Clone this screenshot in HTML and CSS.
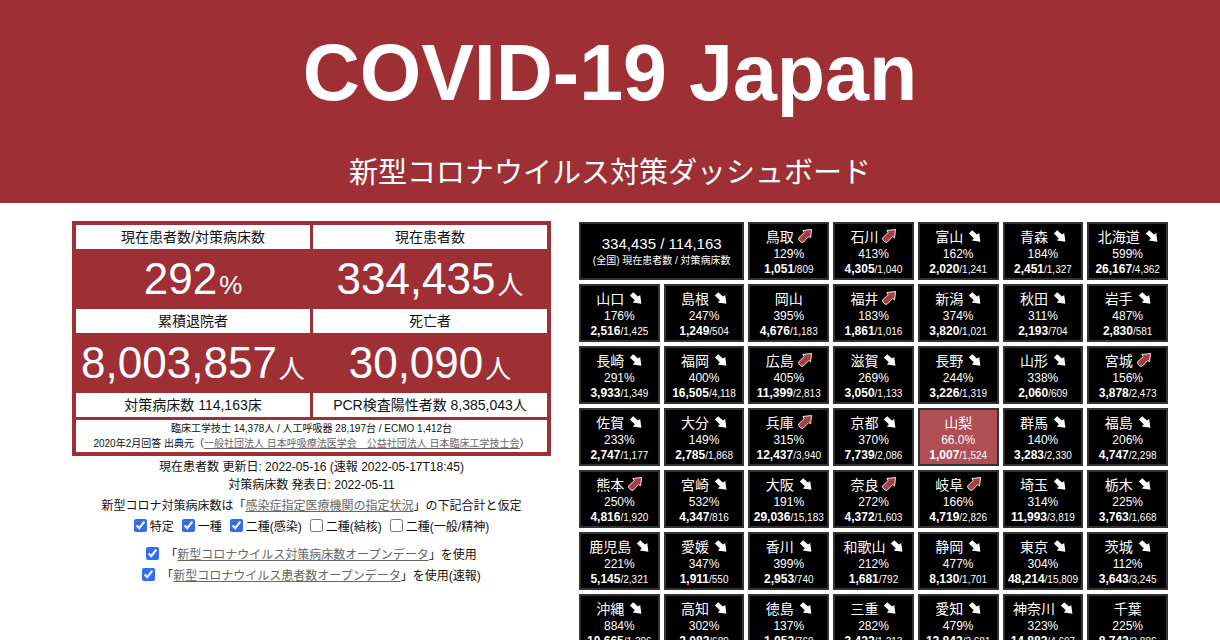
FILE: index.html
```html
<!DOCTYPE html>
<html lang="ja">
<head>
<meta charset="utf-8">
<title>COVID-19 Japan 新型コロナウイルス対策ダッシュボード</title>
<link rel="stylesheet" href="styles.css">
</head>
<body>
<header class="hero">
  <h1 class="hero-title">COVID-19 Japan</h1>
  <p class="hero-sub">新型コロナウイルス対策ダッシュボード</p>
</header>
<main class="board">
  <section class="summary">
    <div class="stats">
      <h2 class="label">現在患者数/対策病床数</h2>
      <h2 class="label">現在患者数</h2>
      <p class="figure">292<span class="unit">%</span></p>
      <p class="figure">334,435<span class="unit">人</span></p>
      <h2 class="label">累積退院者</h2>
      <h2 class="label">死亡者</h2>
      <p class="figure">8,003,857<span class="unit">人</span></p>
      <p class="figure">30,090<span class="unit">人</span></p>
      <p class="label">対策病床数 114,163床</p>
      <p class="label">PCR検査陽性者数 8,385,043人</p>
      <p class="equipment">臨床工学技士 14,378人 / 人工呼吸器 28,197台 / ECMO 1,412台<br>2020年2月回答 出典元（<a href="#source">一般社団法人 日本呼吸療法医学会　公益社団法人 日本臨床工学技士会</a>）</p>
    </div>
    <p class="note">現在患者数 更新日: 2022-05-16 (速報 2022-05-17T18:45)</p>
    <p class="note">対策病床数 発表日: 2022-05-11</p>
    <p class="note note-beds">新型コロナ対策病床数は「<a href="#beds">感染症指定医療機関の指定状況</a>」の下記合計と仮定</p>
    <div class="checks">
      <label class="check"><input type="checkbox" checked>特定</label>
      <label class="check"><input type="checkbox" checked>一種</label>
      <label class="check"><input type="checkbox" checked>二種(感染)</label>
      <label class="check"><input type="checkbox">二種(結核)</label>
      <label class="check"><input type="checkbox">二種(一般/精神)</label>
    </div>
    <div class="sources">
      <div class="source"><input type="checkbox" id="open-beds" checked><label for="open-beds">「<a href="#open-beds-data">新型コロナウイルス対策病床数オープンデータ</a>」を使用</label></div>
      <div class="source"><input type="checkbox" id="open-patients" checked><label for="open-patients">「<a href="#open-patients-data">新型コロナウイルス患者数オープンデータ</a>」を使用(速報)</label></div>
    </div>
  </section>
  <section class="tiles" id="tiles">
    <div class="tile tile-total">
      <div class="total-figure">334,435 / 114,163</div>
      <div class="total-label">(全国) 現在患者数 / 対策病床数</div>
    </div>
  </section>
</main>
<script src="tiles.js"></script>
</body>
</html>
```
FILE: styles.css
```css
* { box-sizing: border-box; }
body {
  margin: 0;
  background: #fff;
  color: #111;
  font-family: "Liberation Sans", "Noto Sans CJK JP", sans-serif;
}
h1, h2, p { margin: 0; font-weight: 400; }
a { color: #666; text-decoration: underline; }

.hero {
  padding: 27px 0 12px;
  background: #9e3035;
  color: #fff;
  text-align: center;
}
.hero-title { font-size: 79px; line-height: 92px; font-weight: 700; }
.hero-sub { padding-top: 36px; font-size: 29px; line-height: 36px; }

.board {
  display: grid;
  grid-template-columns: 479fr 589fr;
  gap: 28px;
  align-items: start;
  padding: 18px 52px 20px 72px;
}

.summary { text-align: center; }
.stats {
  display: grid;
  grid-template-columns: 1fr 1fr;
  column-gap: 3px;
  margin-bottom: 2px;
  padding: 4px;
  background: #9e3035;
}
.label { background: #fff; font-size: 14px; line-height: 24px; }
.figure { color: #fff; font-size: 44px; line-height: 60px; white-space: nowrap; }
.unit { padding-left: 2px; font-size: 26px; line-height: 1; }
.equipment {
  grid-column: 1 / -1;
  margin-top: 3px;
  padding: 1px 0;
  background: #fff;
  font-size: 10px;
  line-height: 15px;
}
.note { font-size: 12px; line-height: 18px; }
.note-beds { padding: 3px 0 2px; }

.checks { display: flex; justify-content: center; gap: 8px; }
.check, .source {
  display: flex;
  align-items: center;
  font-size: 12px;
  line-height: 20px;
}
.check { gap: 3px; white-space: nowrap; }
.source { justify-content: center; gap: 6px; }
.sources { display: grid; gap: 1px; padding-top: 8px; }
input { width: 13px; height: 13px; margin: 0; accent-color: #2f6df6; }
.check input, .source input { margin-bottom: 4px; }

.tiles {
  display: grid;
  grid-template-columns: repeat(7, 1fr);
  gap: 4px;
  padding-top: 1px;
}
.tile {
  padding: 3px 0 1px;
  border: 2px solid #333;
  background: #000;
  color: #fff;
  text-align: center;
  white-space: nowrap;
}
.tile-total { grid-column: span 2; padding-top: 10px; }
.tile-low { background: #b04e55; }
.total-figure { font-size: 15px; line-height: 20px; }
.total-label { font-size: 10px; line-height: 14px; }
.name {
  display: flex;
  align-items: center;
  justify-content: center;
  gap: 4px;
  font-size: 14px;
  line-height: 20px;
}
.arrow { width: 14px; height: 14px; margin-bottom: 2px; }
.rate { font-size: 12px; line-height: 15px; }
.count { font-size: 10px; line-height: 15px; }
.count b { font-size: 12px; }
```
FILE: tiles.js
```js
// name, patients per bed, patients, beds, trend
const prefectures = [
  ["鳥取", "129%", "1,051", "809", "up"],
  ["石川", "413%", "4,305", "1,040", "up"],
  ["富山", "162%", "2,020", "1,241", "down"],
  ["青森", "184%", "2,451", "1,327", "down"],
  ["北海道", "599%", "26,167", "4,362", "down"],
  ["山口", "176%", "2,516", "1,425", "down"],
  ["島根", "247%", "1,249", "504", "down"],
  ["岡山", "395%", "4,676", "1,183", ""],
  ["福井", "183%", "1,861", "1,016", "up"],
  ["新潟", "374%", "3,820", "1,021", "down"],
  ["秋田", "311%", "2,193", "704", "down"],
  ["岩手", "487%", "2,830", "581", "down"],
  ["長崎", "291%", "3,933", "1,349", "down"],
  ["福岡", "400%", "16,505", "4,118", "down"],
  ["広島", "405%", "11,399", "2,813", "up"],
  ["滋賀", "269%", "3,050", "1,133", "down"],
  ["長野", "244%", "3,226", "1,319", "down"],
  ["山形", "338%", "2,060", "609", "down"],
  ["宮城", "156%", "3,878", "2,473", "up"],
  ["佐賀", "233%", "2,747", "1,177", "down"],
  ["大分", "149%", "2,785", "1,868", "down"],
  ["兵庫", "315%", "12,437", "3,940", "up"],
  ["京都", "370%", "7,739", "2,086", "down"],
  ["山梨", "66.0%", "1,007", "1,524", ""],
  ["群馬", "140%", "3,283", "2,330", "down"],
  ["福島", "206%", "4,747", "2,298", "down"],
  ["熊本", "250%", "4,816", "1,920", "up"],
  ["宮崎", "532%", "4,347", "816", "down"],
  ["大阪", "191%", "29,036", "15,183", "down"],
  ["奈良", "272%", "4,372", "1,603", "up"],
  ["岐阜", "166%", "4,719", "2,826", "up"],
  ["埼玉", "314%", "11,993", "3,819", "down"],
  ["栃木", "225%", "3,763", "1,668", "down"],
  ["鹿児島", "221%", "5,145", "2,321", "down"],
  ["愛媛", "347%", "1,911", "550", "down"],
  ["香川", "399%", "2,953", "740", "down"],
  ["和歌山", "212%", "1,681", "792", "down"],
  ["静岡", "477%", "8,130", "1,701", "down"],
  ["東京", "304%", "48,214", "15,809", "down"],
  ["茨城", "112%", "3,643", "3,245", "down"],
  ["沖縄", "884%", "10,665", "1,206", "down"],
  ["高知", "302%", "2,082", "689", "down"],
  ["徳島", "137%", "1,053", "769", "down"],
  ["三重", "282%", "3,422", "1,213", "down"],
  ["愛知", "479%", "12,842", "2,681", "down"],
  ["神奈川", "323%", "14,882", "4,607", "down"],
  ["千葉", "225%", "8,743", "3,886", ""]
];

const arrows = {
  up: '<svg class="arrow" viewBox="0 0 14 14" aria-hidden="true"><path d="M13.5 .5 12.6 8.8 10.6 7.6 5 13.4 2.8 13 .8 10.8 .7 8.8 6.2 3.6 4.9 1.5Z" fill="#a83c40" stroke="#fff" stroke-width=".9" stroke-linejoin="round"/></svg>',
  down: '<svg class="arrow" viewBox="0 0 14 14" aria-hidden="true"><path d="M1.8 4.6 5.2 1.2 10 5.4 12.2 4 13.4 12.8 4.8 11.6 6.8 9.2Z" fill="#fff"/></svg>',
  "": ""
};

document.getElementById("tiles").insertAdjacentHTML("beforeend",
  prefectures.map(([name, rate, patients, beds, trend]) =>
    `<div class="tile${parseFloat(rate) < 100 ? " tile-low" : ""}">
      <div class="name">${name}${arrows[trend]}</div>
      <div class="rate">${rate}</div>
      <div class="count"><b>${patients}</b>/${beds}</div>
    </div>`).join(""));
```
